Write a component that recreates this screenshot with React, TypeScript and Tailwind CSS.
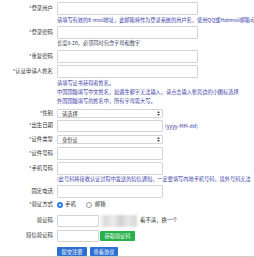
import type { ReactNode } from 'react';

type RowProps = {
  label: string;
  required?: boolean;
  className: string;
  children?: ReactNode;
};

function Row({ label, required, className, children }: RowProps) {
  return (
    <div className={`flex items-center ${className}`}>
      <div className="w-[53px] shrink-0 whitespace-nowrap text-right text-[5.4px] text-[#333]">
        {required && '*'}
        {label}
      </div>
      <div className="ml-[4px] flex h-full items-center">{children}</div>
    </div>
  );
}

function Hint({ children, className }: { children: ReactNode; className: string }) {
  return <div className={`ml-[57px] whitespace-nowrap text-[5.2px] ${className}`}>{children}</div>;
}

function TextInput({ className }: { className: string }) {
  return <div className={`rounded-[1px] border border-[#d4d4d4] bg-white ${className}`} />;
}

function Select({ value }: { value: string }) {
  return (
    <div className="flex h-[9px] w-[106px] items-center justify-between rounded-[1px] border border-[#d4d4d4] bg-white pl-[4px] pr-[2px] text-[5.2px] text-[#333]">
      <span>{value}</span>
      <svg width="3" height="5" viewBox="0 0 3 5">
        <path d="M1.5 0 L3 2 L0 2 Z M1.5 5 L3 3 L0 3 Z" fill="#555" />
      </svg>
    </div>
  );
}

function Radio({ checked }: { checked?: boolean }) {
  return checked ? (
    <span className="flex h-[6px] w-[6px] items-center justify-center rounded-full bg-[#2b7de9]">
      <span className="h-[2px] w-[2px] rounded-full bg-white" />
    </span>
  ) : (
    <span className="block h-[6px] w-[6px] rounded-full border border-[#999] bg-white" />
  );
}

export default function App() {
  return (
    <div className="h-[257px] w-[254px] overflow-hidden bg-white pt-[2px] font-['Noto_Sans_CJK_SC',sans-serif] leading-none">
      <Row label="登录用户" required className="h-[13px]">
        <TextInput className="h-[13px] w-[141px]" />
      </Row>
      <Hint className="h-[9px] leading-[9px] text-[#3b3ba6]">
        请填写有效的E-mail地址，此邮箱将作为登录系统的用户名，使用QQ或Hotmail邮箱可
      </Hint>
      <Row label="登录密码" required className="mt-[2px] h-[13px]">
        <TextInput className="h-[13px] w-[141px]" />
      </Row>
      <Hint className="h-[8px] leading-[8px] text-[#3d4260]">长度8-20，必须同时包含字母和数字</Hint>
      <Row label="重复密码" required className="mt-[3px] h-[13px]">
        <TextInput className="h-[13px] w-[141px]" />
      </Row>
      <Row label="认证申请人姓名" required className="mt-[2px] h-[13px]">
        <TextInput className="h-[13px] w-[141px]" />
      </Row>
      <Hint className="leading-[9px] text-[#3b3ba6]">
        <div>请填写证书获得者姓名。</div>
        <div>中国国籍填写中文姓名，如遇生僻字无法输入，请点击输入框旁边的小图标选择</div>
        <div>外国国籍填写的姓名中，所有字母需大写。</div>
      </Hint>
      <Row label="性别" required className="mt-[4px] h-[9px]">
        <Select value="请选择" />
      </Row>
      <Row label="出生日期" required className="mt-[2px] h-[12px]">
        <TextInput className="h-[12px] w-[106px]" />
        <span className="ml-[2px] text-[5.2px] text-[#3b3ba6]">(yyyy-MM-dd)</span>
      </Row>
      <Row label="证件类型" required className="mt-[3px] h-[9px]">
        <Select value="身份证" />
      </Row>
      <Row label="证件号码" required className="mt-[3px] h-[13px]">
        <TextInput className="h-[13px] w-[106px]" />
      </Row>
      <Row label="手机号码" required className="mt-[2px] h-[13px]">
        <TextInput className="h-[13px] w-[106px]" />
      </Row>
      <Hint className="h-[8px] leading-[8px] text-[#3b3ba6]">
        (此号码将接收认证过程中发送的短信通知，一定要填写内地手机号码，境外号码无法
      </Hint>
      <Row label="固定电话" className="mt-[2px] h-[13px]">
        <TextInput className="h-[13px] w-[106px]" />
      </Row>
      <Row label="验证方式" required className="h-[14px]">
        <div className="flex items-center text-[5.4px] text-[#333]">
          <Radio checked />
          <span className="ml-[2px]">手机</span>
          <span className="ml-[10px]">
            <Radio />
          </span>
          <span className="ml-[3px]">邮箱</span>
        </div>
      </Row>
      <Row label="验证码" className="mt-[3px] h-[12px]">
        <TextInput className="h-[12px] w-[42px]" />
        <div className="ml-[1px] h-[12px] w-[37px] bg-[linear-gradient(90deg,#f4f4f4_0%,#d9d9d9_15%,#eeeeee_35%,#cfcfcf_55%,#e8e8e8_75%,#d6d6d6_100%)] blur-[1px]" />
        <span className="ml-[3px] text-[5.4px] text-[#333]">看不清，换一个</span>
      </Row>
      <Row label="短信验证码" className="mt-[3px] h-[12px]">
        <TextInput className="h-[12px] w-[42px]" />
        <div className="ml-[1px] flex h-[10px] w-[35px] items-center justify-center rounded-[1px] bg-[#27b04b] text-[5.2px] text-white">
          获取验证码
        </div>
      </Row>
      <div className="ml-[57px] mt-[5px] flex h-[9px] gap-[3px]">
        <div className="flex w-[30px] items-center justify-center rounded-[1px] bg-[#2c6fd1] text-[5.2px] text-white">
          提交注册
        </div>
        <div className="flex w-[28px] items-center justify-center rounded-[1px] bg-[#2c6fd1] text-[5.2px] text-white">
          查看协议
        </div>
      </div>
      <div className="border-t border-[#cfcfcf]" />
    </div>
  );
}
